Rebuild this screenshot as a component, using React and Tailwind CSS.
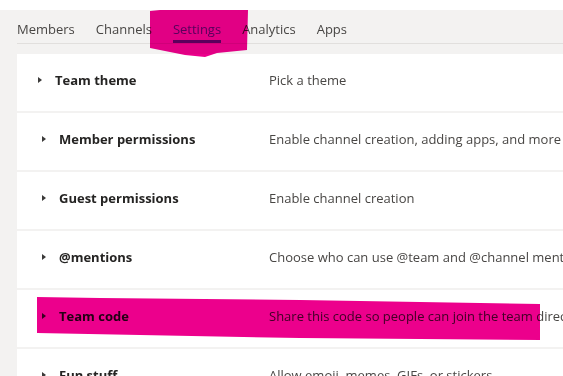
import React from 'react';

const tabs = ['Members', 'Channels', 'Settings', 'Analytics', 'Apps'];

const rows = [
    { title: 'Team theme', desc: 'Pick a theme', first: true },
    { title: 'Member permissions', desc: 'Enable channel creation, adding apps, and more' },
    { title: 'Guest permissions', desc: 'Enable channel creation' },
    { title: '@mentions', desc: 'Choose who can use @team and @channel mentions' },
    { title: 'Team code', desc: 'Share this code so people can join the team directly - you won\'t get join requests' },
    { title: 'Fun stuff', desc: 'Allow emoji, memes, GIFs, or stickers' },
];

const Caret = () => (
    <svg width="4" height="6" viewBox="0 0 4 6" className="shrink-0">
        <path d="M0 0 L4 3 L0 6 Z" fill="#3b3a39" />
    </svg>
);

const App = () => {
    return (
        <div className="relative h-[376px] w-[563px] overflow-hidden bg-[#f3f2f1] font-['Open_Sans',sans-serif] text-[13px]">
            <div className="h-[10px] bg-white" />

            {/* tab bar */}
            <div className="pl-[17px]">
                <div className="flex gap-[21px] border-b border-[#e1dfdd] pt-[9px]">
                    {tabs.map((t) => (
                        <div key={t} className="flex flex-col">
                            <span className={`leading-5 ${t === 'Settings' ? 'text-[#6264a7]' : 'text-[#484644]'}`}>{t}</span>
                            <div className={`mt-px h-[3px] ${t === 'Settings' ? 'bg-[#6264a7]' : 'bg-transparent'}`} />
                        </div>
                    ))}
                </div>

                {/* settings list */}
                <div className="mt-[10px] flex flex-col gap-[2px]">
                    {rows.map((r) => (
                        <div key={r.title} className="flex h-[57px] items-start bg-white pt-[16px]">
                            <div className={`flex w-[252px] shrink-0 items-center ${r.first ? 'pl-[21px]' : 'pl-[25px]'}`}>
                                <Caret />
                                <span className="ml-[13px] font-bold leading-5 text-[#252423]">{r.title}</span>
                            </div>
                            <span className="whitespace-nowrap leading-5 text-[#484644]">{r.desc}</span>
                        </div>
                    ))}
                </div>
            </div>

            {/* highlighter marks */}
            <svg className="pointer-events-none absolute left-0 top-0 mix-blend-multiply" width="563" height="376">
                <polygon points="150,11 160,10 248,10 247,50 217,53 205,57 185,55 150,48" fill="#ec008c" />
                <polygon points="37,297 100,298 300,300 540,304 540,340 300,338 37,333" fill="#ec008c" />
            </svg>
        </div>
    );
};

export default App;
